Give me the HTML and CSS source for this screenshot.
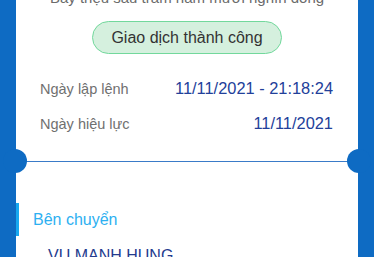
FILE: index.html
```html
<!DOCTYPE html>
<html lang="vi">
<head>
  <meta charset="UTF-8">
  <meta name="viewport" content="width=device-width, initial-scale=1.0">
  <title>Chi tiết giao dịch</title>
  <link rel="stylesheet" href="styles.css">
</head>
<body>
  <div class="card">
    <p class="amount-words">Bảy triệu sáu trăm năm mươi nghìn đồng</p>

    <div class="status-wrap">
      <span class="status success">Giao dịch thành công</span>
    </div>

    <div class="info-list">
      <div class="info-row">
        <span class="label">Ngày lập lệnh</span>
        <span class="value">11/11/2021 - 21:18:24</span>
      </div>
      <div class="info-row">
        <span class="label">Ngày hiệu lực</span>
        <span class="value">11/11/2021</span>
      </div>
    </div>

    <div class="divider"></div>

    <div class="section-title">Bên chuyển</div>
    <div class="party-name">VU MANH HUNG</div>
  </div>
</body>
</html>
```

FILE: styles.css
```css
body {
  margin: 0;
  background-color: #0e6bc3;
  font-family: "Liberation Sans", Arial, sans-serif;
  overflow: hidden;
}

.card {
  margin: 0 16px;
  background-color: #fff;
  height: 300px;
}

.amount-words {
  margin: -12px 0 0;
  line-height: 20px;
  font-size: 15px;
  color: #6b6b6b;
  text-align: center;
}

.status-wrap {
  display: flex;
  justify-content: center;
  margin-top: 13px;
}

.status {
  display: inline-block;
  padding: 5px 18px;
  line-height: 21px;
  font-size: 16px;
  border-radius: 17px;
}

.success {
  background-color: #d5f0de;
  border: 1px solid #72d89c;
  color: #333;
}

.info-list {
  margin-top: 17px;
}

.info-row {
  display: flex;
  justify-content: space-between;
  align-items: center;
  height: 35px;
  padding: 0 25px 0 24px;
}

.label {
  font-size: 14.5px;
  color: #707070;
}

.value {
  font-size: 16.4px;
  color: #22409a;
}

.divider {
  position: relative;
  height: 1px;
  margin-top: 20px;
  background-color: #3a7bc8;
}

.divider::before,
.divider::after {
  content: "";
  position: absolute;
  top: -12px;
  width: 24px;
  height: 24px;
  border-radius: 50%;
  background-color: #0e6bc3;
}

.divider::before {
  left: -13px;
}

.divider::after {
  right: -13px;
}

.section-title {
  margin-top: 41px;
  padding: 6px 14px;
  line-height: 21px;
  font-size: 16px;
  color: #2db0f1;
  border-left: 3px solid #17a8ef;
}

.party-name {
  margin-top: 10px;
  padding-left: 32px;
  line-height: 20px;
  font-size: 16px;
  color: #243b8e;
}
```
